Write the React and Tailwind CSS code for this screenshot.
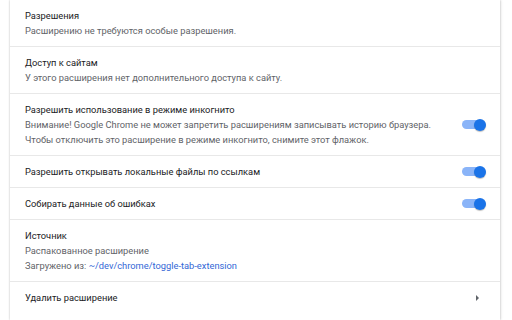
const Toggle = () => (
  <div className="relative w-[24px] h-[12px] flex items-center shrink-0">
    <div className="w-[22px] h-[9px] rounded-full bg-[#8ab4f8]" />
    <div className="absolute right-0 top-0 w-[12px] h-[12px] rounded-full bg-[#1a73e8] shadow-[0_1px_1px_rgba(0,0,0,0.25)]" />
  </div>
);

const Row = ({ children, right, last }) => (
  <div className={`flex items-center justify-between px-[15px] py-[8px] ${last ? '' : 'border-b border-[#e8e8e8]'}`}>
    <div className="flex flex-col whitespace-nowrap">{children}</div>
    {right}
  </div>
);

const Title = ({ children }) => <div className="text-[#202124] leading-[15px]">{children}</div>;
const Sub = ({ children }) => <div className="text-[#5f6368] leading-[15px]">{children}</div>;

export default function App() {
  return (
    <div className="w-[512px] h-[320px] overflow-hidden bg-white font-['Roboto',sans-serif] text-[9.3px]">
      <div className="ml-[10px] w-[490px] h-full bg-white shadow-[0_0_2px_rgba(0,0,0,0.25),1px_0_3px_rgba(0,0,0,0.08)]">
        <Row>
          <Title>Разрешения</Title>
          <Sub>Расширению не требуются особые разрешения.</Sub>
        </Row>
        <Row>
          <Title>Доступ к сайтам</Title>
          <Sub>У этого расширения нет дополнительного доступа к сайту.</Sub>
        </Row>
        <Row right={<div className="mr-[-1px]"><Toggle /></div>}>
          <Title>Разрешить использование в режиме инкогнито</Title>
          <Sub>Внимание! Google Chrome не может запретить расширениям записывать историю браузера.</Sub>
          <Sub>Чтобы отключить это расширение в режиме инкогнито, снимите этот флажок.</Sub>
        </Row>
        <Row right={<div className="mr-[-1px]"><Toggle /></div>}>
          <Title>Разрешить открывать локальные файлы по ссылкам</Title>
        </Row>
        <Row right={<div className="mr-[-1px]"><Toggle /></div>}>
          <Title>Собирать данные об ошибках</Title>
        </Row>
        <Row>
          <Title>Источник</Title>
          <Sub>Распакованное расширение</Sub>
          <Sub>
            Загружено из: <span className="text-[#3367d6]">~/dev/chrome/toggle-tab-extension</span>
          </Sub>
        </Row>
        <Row
          last
          right={
            <svg width="3" height="6" viewBox="0 0 3 6" className="mr-[6px]">
              <path d="M0 0 L3 3 L0 6 Z" fill="#5f6368" />
            </svg>
          }
        >
          <Title>Удалить расширение</Title>
        </Row>
      </div>
    </div>
  );
}
